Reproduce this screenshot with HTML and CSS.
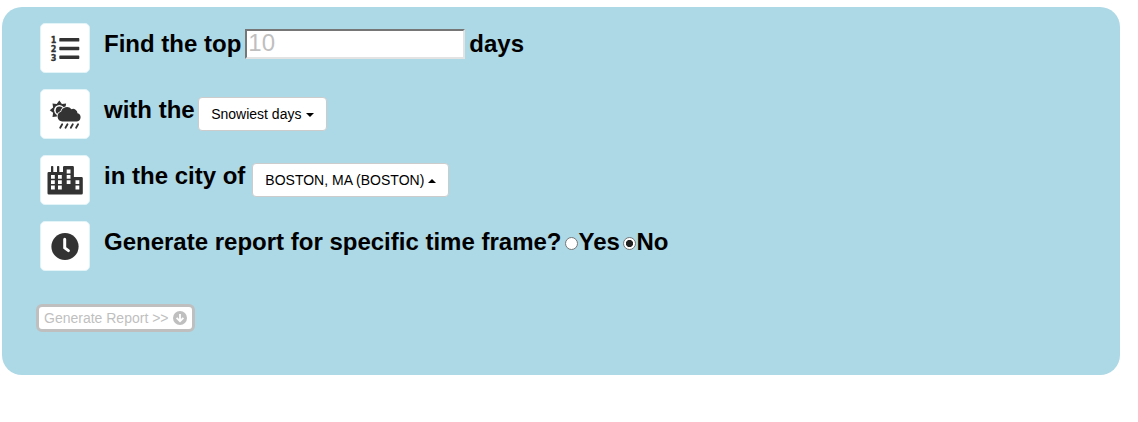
FILE: index.html
```
<!DOCTYPE html>
<html lang="en">
<head>
<meta charset="utf-8">
<title>Weather report</title>
<link rel="stylesheet" href="styles.css">
</head>
<body>
<form class="panel">
  <div class="row">
    <span class="icon"><svg viewBox="0 0 50 50">
      <g class="digits"><text x="10.7" y="20">1</text><text x="10.7" y="29">2</text><text x="10.7" y="38">3</text></g>
      <path d="M20 15h18.600a.7.7 0 0 1 .7.7v2.200a.7.7 0 0 1-.7.7H20a.7.7 0 0 1-.7-.7v-2.200a.7.7 0 0 1 .7-.7zm0 8.700h18.600a.7.7 0 0 1 .7.7v2.200a.7.7 0 0 1-.7.7H20a.7.7 0 0 1-.7-.7v-2.200a.7.7 0 0 1 .7-.7zm0 8.700h18.600a.7.7 0 0 1 .7.7v2.200a.7.7 0 0 1-.7.7H20a.7.7 0 0 1-.7-.7v-2.200a.7.7 0 0 1 .7-.7z"/>
    </svg></span>
    <label class="text" for="count">Find the top</label>
    <input class="count" id="count" type="text" placeholder="10">
    <span class="text">days</span>
  </div>
  <div class="row">
    <span class="icon"><svg viewBox="0 0 50 50">
      <path class="sun" transform="translate(19.3 21.2)" d="M0-9.600L2.600-6.200 6.800-6.800 6.200-2.600 9.600 0 6.200 2.600 6.800 6.800 2.600 6.200 0 9.600-2.600 6.200-6.800 6.800-6.200 2.600-9.600 0-6.200-2.600-6.800-6.800-2.600-6.200z"/>
      <circle class="knockout" cx="19.300" cy="21.200" r="5.200"/>
      <circle cx="19.500" cy="21.400" r="3.800"/>
      <path class="outlined" d="M22.300 32.400a4.900 4.900 0 0 1-1.200-9.600 5.900 5.900 0 0 1 10.400-2.600 4.400 4.400 0 0 1 6 4 4.200 4.200 0 0 1-.5 8.200z"/>
      <path class="rain" d="M22.200 35.200l-2 3.600M27.500 35.200l-2 3.600M32.800 35.200l-2 3.600M38.100 35.200l-2 3.600"/>
    </svg></span>
    <span class="text">with the</span>
    <button class="dropdown metric" type="button">Snowiest days<span class="caret"></span></button>
  </div>
  <div class="row">
    <span class="icon"><svg viewBox="0 0 50 50">
      <path fill-rule="evenodd" d="M8.700 17H11v-5.200q0-.8.8-.8h.7q.8 0 .8.8V17H17v-5.200q0-.8.8-.8h.7q.8 0 .8.8V17H23v-4.700q0-1.300 1.300-1.300h8.300q1.300 0 1.300 1.300V22h7.600q1.300 0 1.300 1.300v14.900q0 1.300-1.300 1.300H8.800Q7.500 39.500 7.500 38.200V18.200Q7.500 17 8.700 17zM11 20v3.800h3.800V20zm0 5.200v3.800h3.800v-3.800zm0 5.400v3.800h3.800v-3.800zM18 20v3.800h3.800V20zm0 5.200v3.800h3.800v-3.800zm0 5.400v3.800h3.800v-3.800zM26.700 14.600v3.800h3.800v-3.800zm0 5.400v3.800h3.800V20zm0 5.200v3.800h3.800v-3.800zM35.500 25.200v3.800h3.800v-3.800zm0 5.400v3.800h3.800v-3.800z"/>
    </svg></span>
    <span class="text">in the city of</span>
    <button class="dropdown city" type="button">BOSTON, MA (BOSTON)<span class="caret up"></span></button>
  </div>
  <div class="row">
    <span class="icon"><svg viewBox="0 0 50 50">
      <circle cx="25" cy="25.500" r="13.600"/>
      <path class="hands" d="M24.700 18.200v8.700l3.700 2.700"/>
    </svg></span>
    <span class="text">Generate report for specific time frame?</span>
    <label class="choice"><span class="radio"></span>Yes</label>
    <label class="choice"><span class="radio on"></span>No</label>
  </div>
  <button class="submit" type="button" disabled>Generate Report &gt;&gt;
    <svg class="arrow" viewBox="0 0 14 14"><circle cx="7" cy="7" r="7"/><path d="M7 3v7M3.600 6.800L7 10.200l3.400-3.400"/></svg>
  </button>
</form>
</body>
</html>
```
FILE: styles.css
```
* { box-sizing: border-box; }
body {
  margin: 0;
  padding: 7px 18px 0 2px;
  background: #fff;
  color: #000;
  font-family: "Liberation Sans", Arial, sans-serif;
}
.panel {
  height: 368px;
  padding: 16px 38px;
  border-radius: 20px;
  background: #add8e6;
}
.row {
  display: flex;
  align-items: flex-start;
  height: 50px;
  margin-bottom: 16px;
  font-size: 24px;
  font-weight: bold;
  line-height: 28px;
  white-space: nowrap;
}
.icon {
  width: 50px;
  height: 50px;
  margin-right: 14px;
  border: 1px solid #e3f4f8;
  border-radius: 5px;
  background: #fff;
}
.icon svg { display: block; width: 50px; height: 50px; margin: -1px; fill: #333; }
.digits {
  font: bold 9px "DejaVu Sans Condensed", "DejaVu Sans", sans-serif;
  stroke: #333;
  stroke-width: 0.3px;
}
.knockout { fill: #fff; }
.outlined { stroke: #fff; stroke-width: 1.6px; paint-order: stroke; }
.rain { stroke: #333; stroke-width: 1.8px; stroke-linecap: round; }
.hands { fill: none; stroke: #fff; stroke-width: 3px; stroke-linecap: round; stroke-linejoin: round; }
.text, .choice { padding-top: 7px; }
.count {
  width: 220px;
  height: 30px;
  margin: 6px 4px 0;
  padding: 0 1px 2px;
  border: 2px solid;
  border-color: #767676 #e3e3e3 #e3e3e3 #767676;
  font: 24px "Liberation Sans", Arial, sans-serif;
}
.count::placeholder { color: #bfbfbf; opacity: 1; }
.dropdown {
  display: flex;
  align-items: center;
  justify-content: space-between;
  height: 34px;
  margin: 8px 0 0 3.5px;
  padding: 0 12px;
  border: 1px solid #ccc;
  border-radius: 4px;
  background: #fff;
  color: #000;
  font: 14px "Liberation Sans", Arial, sans-serif;
}
.metric { width: 129px; }
.city { width: 197px; margin-left: 7px; }
.caret {
  position: relative;
  top: 1px;
  border: 4px solid transparent;
  border-top-color: #000;
  border-bottom-width: 0;
}
.caret.up { border-width: 0 4px 4px; border-bottom-color: #000; }
.choice { display: flex; margin-left: 4px; }
.choice + .choice { margin-left: 3.5px; }
.radio {
  width: 13px;
  height: 13px;
  margin-top: 9px;
  border: 1px solid #767676;
  border-radius: 50%;
  background: #fff;
}
.radio.on { background: radial-gradient(circle, #222 3.2px, #fff 4px); }
.submit {
  display: flex;
  align-items: center;
  justify-content: space-between;
  width: 159px;
  height: 28px;
  margin: 33px 0 0 -4px;
  padding: 0 5px;
  border: 3px solid #bfbfbf;
  border-radius: 6px;
  background: #fff;
  color: #bfbfbf;
  font: 14px "Liberation Sans", Arial, sans-serif;
}
.arrow { width: 14px; height: 14px; fill: #bfbfbf; }
.arrow path { fill: none; stroke: #fff; stroke-width: 1.8px; }
```
